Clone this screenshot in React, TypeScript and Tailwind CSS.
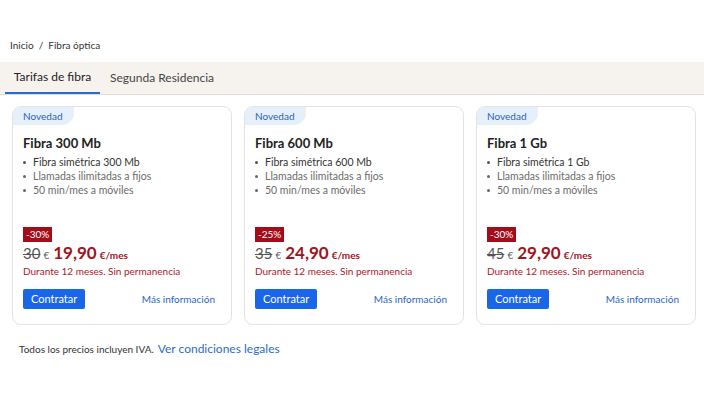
import React from "react";

const plans = [
  { name: "Fibra 300 Mb", speed: "Fibra simétrica 300 Mb", off: "-30%", old: "30", price: "19,90" },
  { name: "Fibra 600 Mb", speed: "Fibra simétrica 600 Mb", off: "-25%", old: "35", price: "24,90" },
  { name: "Fibra 1 Gb", speed: "Fibra simétrica 1 Gb", off: "-30%", old: "45", price: "29,90" },
];

function PlanCard({ plan }: { plan: (typeof plans)[number] }) {
  return (
    <div className="flex h-[219px] flex-col rounded-[9px] border border-[#e3e3e3] bg-white">
      <div className="flex">
        <span className="rounded-tl-[8px] rounded-br-[12px] bg-[#e6f0fa] pl-[10px] pr-[12px] py-[2px] text-[10px] leading-[14px] text-[#2a63b8]">
          Novedad
        </span>
      </div>
      <div className="flex flex-1 flex-col px-[10px]">
        <h3 className="mt-[10px] text-[13px] font-bold leading-[16px] text-[#222]">{plan.name}</h3>
        <ul className="mt-[4px] flex flex-col text-[10.5px] leading-[14px]">
          <li className="flex items-center gap-[7px] text-[#333]">
            <span className="h-[3px] w-[3px] rounded-full bg-[#555]" />
            {plan.speed}
          </li>
          <li className="flex items-center gap-[7px] text-[#6b6b6b]">
            <span className="h-[3px] w-[3px] rounded-full bg-[#666]" />
            Llamadas ilimitadas a fijos
          </li>
          <li className="flex items-center gap-[7px] text-[#6b6b6b]">
            <span className="h-[3px] w-[3px] rounded-full bg-[#666]" />
            50 min/mes a móviles
          </li>
        </ul>
        <div className="mt-auto flex">
          <span className="bg-[#a30d1a] px-[3px] text-[10px] leading-[15px] text-white">{plan.off}</span>
        </div>
        <div className="mt-[3px] flex items-baseline leading-[15px]">
          <span className="text-[15px] text-[#555] line-through decoration-[1px]">{plan.old}</span>
          <span className="ml-[3px] text-[10px] text-[#666]">€</span>
          <span className="ml-[4px] text-[17px] font-bold text-[#9e1420]">{plan.price}</span>
          <span className="ml-[3px] text-[10px] font-bold text-[#9e1420]">€/mes</span>
        </div>
        <p className="mt-[1px] text-[10px] leading-[14px] text-[#b0182a]">Durante 12 meses. Sin permanencia</p>
        <div className="mb-[15px] mt-[11px] flex items-center justify-between">
          <button className="h-[20px] rounded-[2px] bg-[#1a66e8] px-[8px] text-[11px] text-white">Contratar</button>
          <a className="pr-[6px] text-[10px] text-[#2a66c9]">Más información</a>
        </div>
      </div>
    </div>
  );
}

export default function App() {
  return (
    <div className="h-[396px] w-[704px] bg-white font-['Lato',sans-serif] text-[#222]">
      <div className="px-[10px] pt-[38px] text-[10px] leading-[14px] text-[#333]">Inicio&nbsp;&nbsp;/&nbsp;&nbsp;Fibra óptica</div>

      <div className="mt-[10px] flex h-[33px] border-b border-[#dcdcdc] bg-[#f6f3ef] px-[5px]">
        <div className="flex w-[95px] items-center justify-center border-b-2 border-[#2a6dc9] text-[12px] text-[#222]">
          Tarifas de fibra
        </div>
        <div className="ml-[10px] flex items-center text-[12px] text-[#444]">Segunda Residencia</div>
      </div>

      <div className="mt-[11px] grid grid-cols-[220px_220px_220px] gap-[12px] px-[12px]">
        {plans.map((p) => (
          <PlanCard key={p.name} plan={p} />
        ))}
      </div>

      <div className="mt-[15px] flex items-baseline px-[19px]">
        <span className="text-[10px] text-[#333]">Todos los precios incluyen IVA.</span>
        <a className="ml-[4px] text-[12px] text-[#2a6dc9]">Ver condiciones legales</a>
      </div>
    </div>
  );
}
